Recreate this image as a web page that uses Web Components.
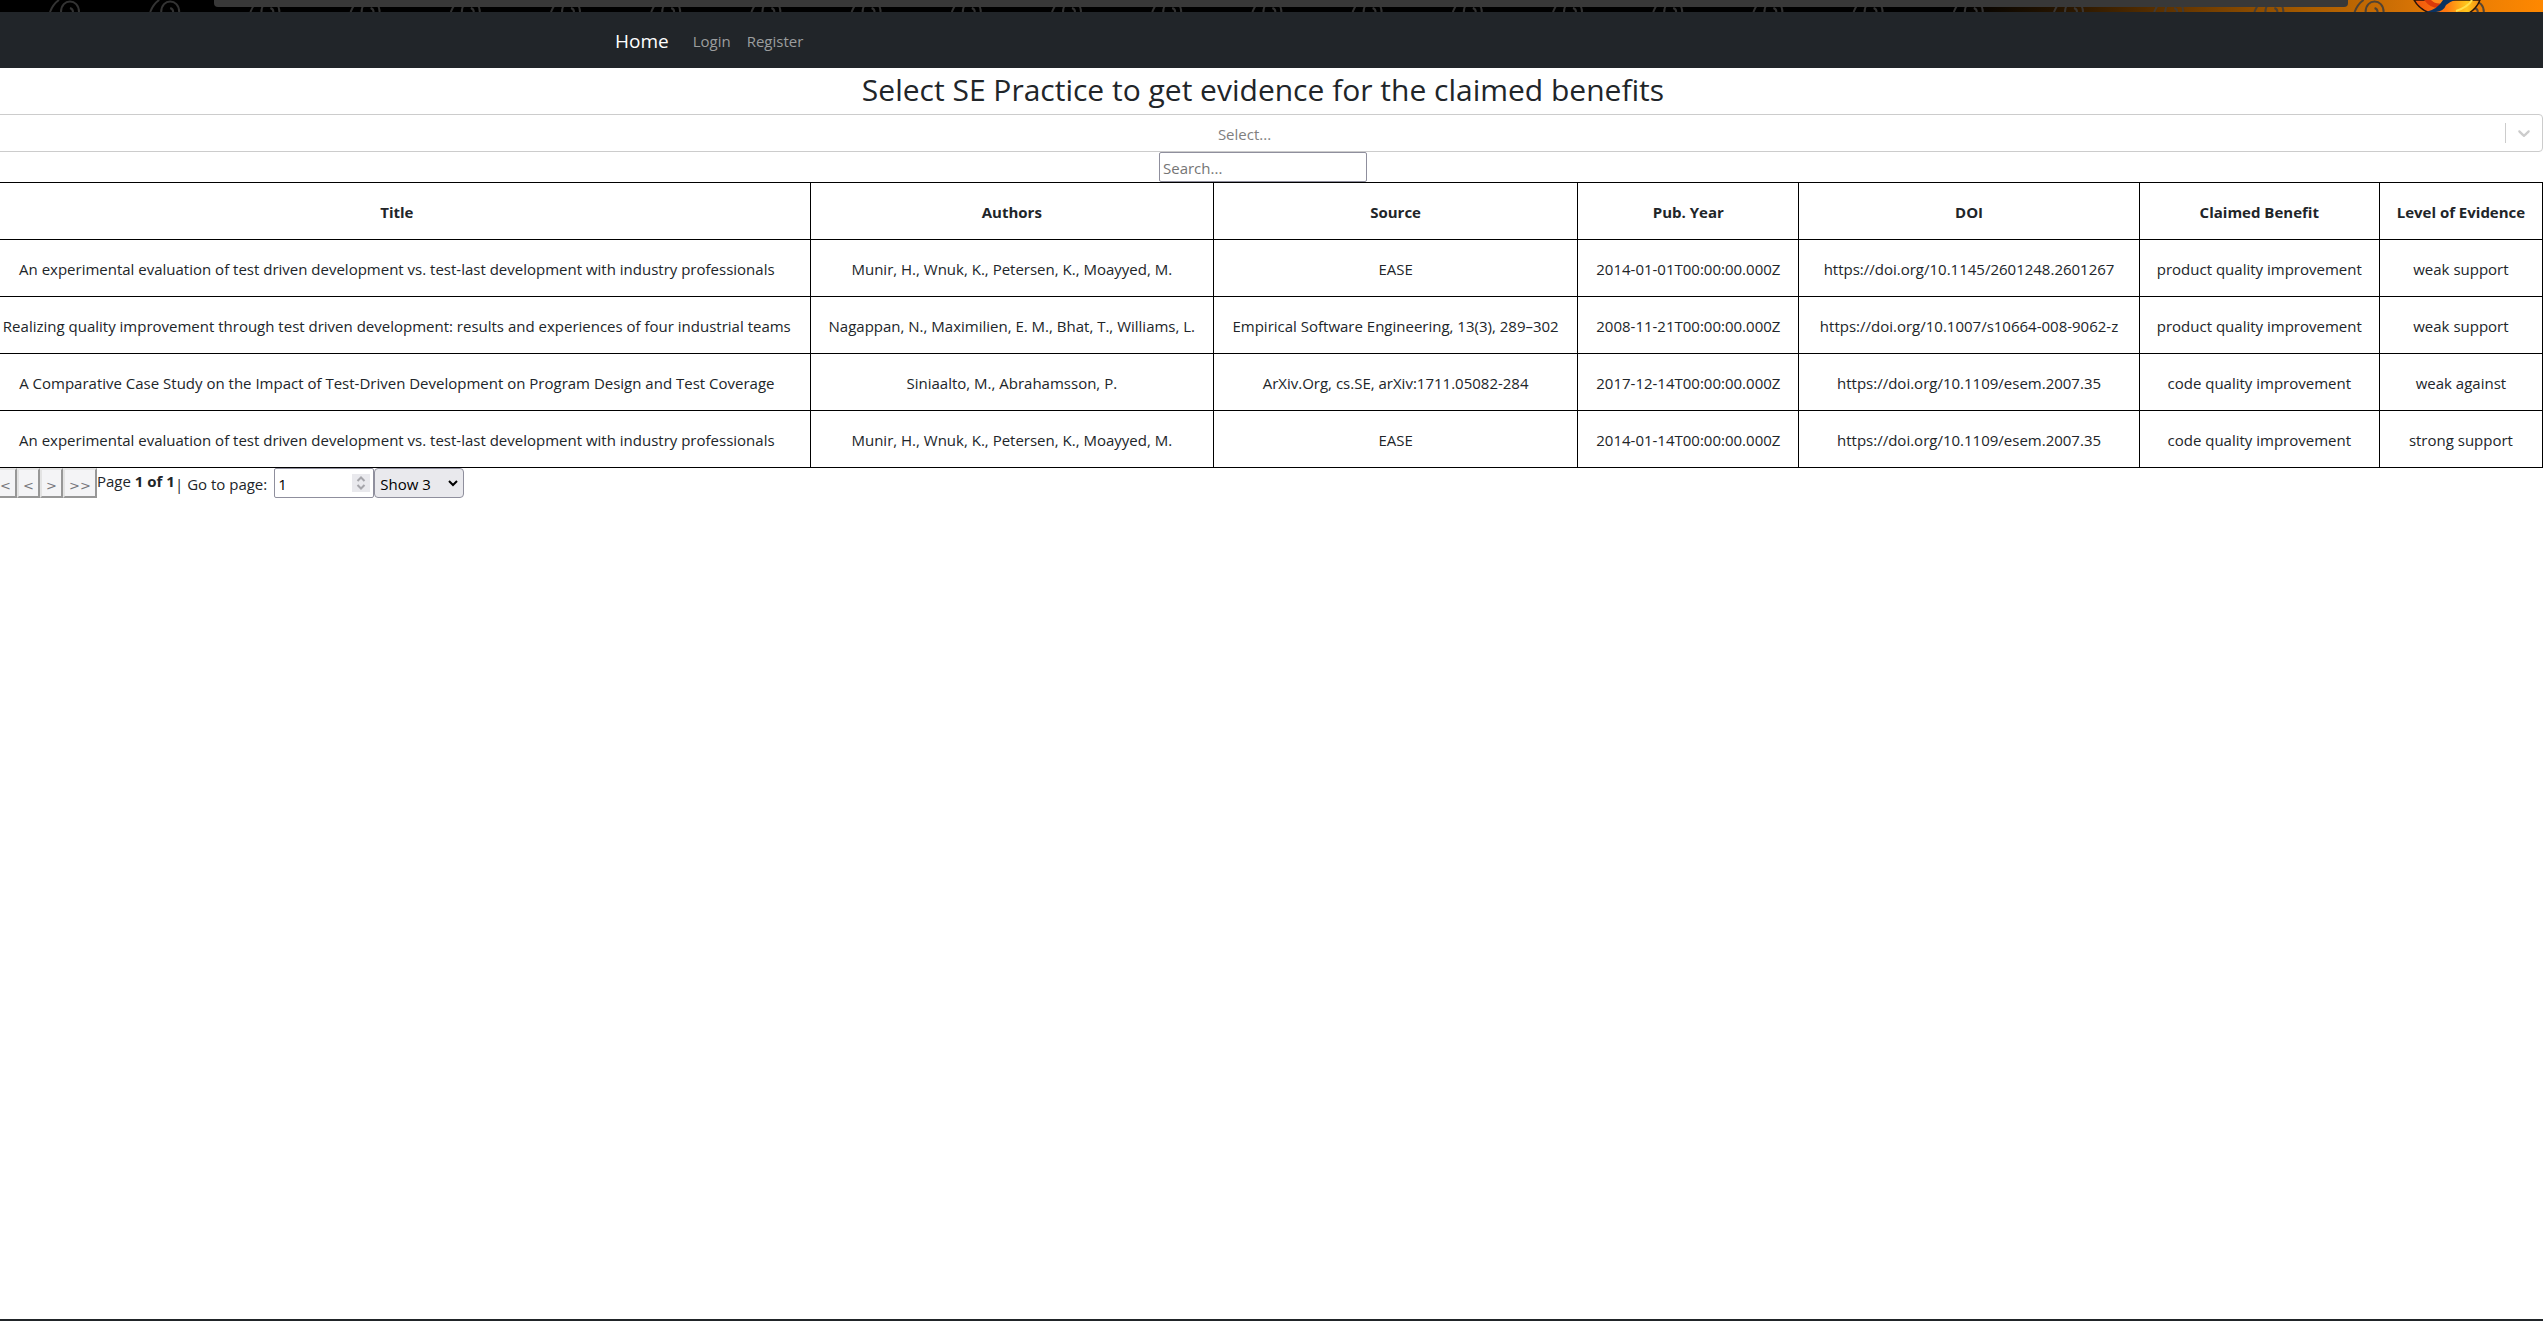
<!DOCTYPE html>
<html lang="en">
<head>
<meta charset="utf-8">
<title>SE Practice Evidence</title>
<style>
  html, body { margin: 0; }
  body {
    font-family: "Open Sans", "Noto Sans", sans-serif;
    font-size: 15px;
    line-height: 24px;
    color: #212529;
    background: #fff;
    overflow-x: hidden;
  }
</style>
</head>
<body>
<evidence-app></evidence-app>
<script>
const define = (name, html, setup) => {
  const tpl = document.createElement('template');
  tpl.innerHTML = '<style>*,*::before,*::after{box-sizing:border-box}</style>' + html;
  customElements.define(name, class extends HTMLElement {
    constructor() {
      super();
      this.attachShadow({ mode: 'open' }).append(tpl.content.cloneNode(true));
      if (setup) setup(this.shadowRoot, this);
    }
  });
};

define('theme-strip', `
  <style>
    :host { display: block; height: 12px; background: #000; overflow: hidden; }
    svg { display: block; width: 100%; height: 12px; }
  </style>
  <svg viewBox="0 0 2543 12" preserveAspectRatio="xMaxYMin slice" aria-hidden="true">
    <defs>
      <linearGradient id="glow">
        <stop offset="0" stop-color="#000"/>
        <stop offset=".2" stop-color="#2c1800"/>
        <stop offset=".4" stop-color="#6c3a00"/>
        <stop offset=".6" stop-color="#a85c00"/>
        <stop offset=".8" stop-color="#dc7606"/>
        <stop offset="1" stop-color="#ff8800"/>
      </linearGradient>
      <linearGradient id="fox">
        <stop offset="0" stop-color="#f0560c"/>
        <stop offset=".5" stop-color="#ff7a10"/>
        <stop offset=".8" stop-color="#ffc61c"/>
        <stop offset="1" stop-color="#f58a10"/>
      </linearGradient>
    </defs>
    <rect x="1960" width="583" height="12" fill="url(#glow)"/>
    <g id="swirls" fill="none" stroke="#3c3c3c" stroke-opacity=".85" stroke-width="2"></g>
    <path d="M2414 0C2418 7 2424 11 2430 13H2469C2474 10 2478 5 2480 0Z" fill="url(#fox)" stroke="#2a1408" stroke-width="1.5"/>
    <path d="M2424 0Q2431 9 2440 8Q2447 6 2448 0" fill="#d93a0a"/>
    <path d="M2431 0Q2436 5 2443 3L2446 0Z" fill="#ff8a1c"/>
    <path d="M2426 12Q2438 9 2443 0H2455Q2449 2 2446 5Q2444 11 2436 12Z" fill="#0a3260"/>
    <path d="M2456 11Q2468 7 2472 0" fill="none" stroke="#ffe04a" stroke-width="2"/>
    <path d="M214 0V3Q214 7 218 7H2344Q2348 7 2348 3V0Z" fill="#383838"/>
  </svg>`, root => {
  const g = root.getElementById('swirls');
  const swirl = 'M1 12Q4 4 10 0M12 12C12 -2 30 -2 30 12M21 8Q24 9 24 12';
  for (let i = 0; i < 25; i++) {
    const p = document.createElementNS('http://www.w3.org/2000/svg', 'path');
    p.setAttribute('d', swirl);
    p.setAttribute('transform', 'translate(' + (49 + i * 100.2) + ' 0)');
    g.append(p);
  }
});

define('site-nav', `
  <style>
    :host { display: block; background: #212529; }
    nav { display: flex; align-items: center; max-width: 1320px; height: 56px; margin: 0 auto; padding: 2px 12px 0; }
    .brand { font-size: 19px; line-height: 30px; color: #fff; margin-right: 16px; }
    a { color: #9b9d9e; text-decoration: none; }
    .link { padding: 8px; }
  </style>
  <nav>
    <a class="brand" href="#home">Home</a>
    <a class="link" href="#login">Login</a>
    <a class="link" href="#register">Register</a>
  </nav>`);

define('practice-select', `
  <style>
    :host { display: flex; align-items: center; height: 38px; border: 1px solid #ccc; border-radius: 4px; background: #fff; }
    input { flex: 1; min-width: 0; height: 36px; border: 0; padding: 2px 0 0; background: none; font: inherit; text-align: center; outline: 0; }
    input::placeholder { color: #808080; opacity: 1; }
    .bar { width: 1px; height: 20px; background: #ccc; }
    button { display: flex; border: 0; background: none; padding: 8px; }
    svg { width: 20px; height: 20px; fill: #ccc; }
  </style>
  <input type="text" role="combobox" aria-label="SE Practice" aria-expanded="false" placeholder="Select...">
  <span class="bar"></span>
  <button type="button" aria-label="Open">
    <svg viewBox="0 0 20 20"><path d="M4.516 7.548c0.436-0.446 1.043-0.481 1.576 0l3.908 3.747 3.908-3.747c0.533-0.481 1.141-0.446 1.574 0 0.436 0.445 0.408 1.197 0 1.615-0.406 0.418-4.695 4.502-4.695 4.502-0.217 0.223-0.502 0.335-0.787 0.335s-0.57-0.112-0.789-0.335c0 0-4.287-4.084-4.695-4.502s-0.436-1.17 0-1.615z"/></svg>
  </button>`);

define('search-box', `
  <style>
    :host { display: flex; justify-content: center; }
    input { width: 208px; height: 30px; border: 1px solid #8f8f9d; border-radius: 2px; padding: 2px 3px 0; font: inherit; background: #fff; }
    input::placeholder { color: #757575; opacity: 1; }
  </style>
  <input type="text" aria-label="Search" placeholder="Search...">`);

define('evidence-table', `
  <style>
    :host { display: block; }
    table { width: 100%; table-layout: fixed; border-collapse: collapse; text-align: center; }
    th, td { border: 1px solid #000; padding: 17px 0 15px; white-space: nowrap; font-weight: 400; }
    th { font-weight: 700; }
  </style>
  <table>
    <colgroup></colgroup>
    <thead><tr></tr></thead>
    <tbody></tbody>
  </table>`, root => {
  const columns = [
    ['Title', 826], ['Authors', 403], ['Source', 364], ['Pub. Year', 221],
    ['DOI', 340], ['Claimed Benefit', 240], ['Level of Evidence', 163]
  ];
  const rows = [
    ['An experimental evaluation of test driven development vs. test-last development with industry professionals', 'Munir, H., Wnuk, K., Petersen, K., Moayyed, M.', 'EASE', '2014-01-01T00:00:00.000Z', 'https://doi.org/10.1145/2601248.2601267', 'product quality improvement', 'weak support'],
    ['Realizing quality improvement through test driven development: results and experiences of four industrial teams', 'Nagappan, N., Maximilien, E. M., Bhat, T., Williams, L.', 'Empirical Software Engineering, 13(3), 289–302', '2008-11-21T00:00:00.000Z', 'https://doi.org/10.1007/s10664-008-9062-z', 'product quality improvement', 'weak support'],
    ['A Comparative Case Study on the Impact of Test-Driven Development on Program Design and Test Coverage', 'Siniaalto, M., Abrahamsson, P.', 'ArXiv.Org, cs.SE, arXiv:1711.05082-284', '2017-12-14T00:00:00.000Z', 'https://doi.org/10.1109/esem.2007.35', 'code quality improvement', 'weak against'],
    ['An experimental evaluation of test driven development vs. test-last development with industry professionals', 'Munir, H., Wnuk, K., Petersen, K., Moayyed, M.', 'EASE', '2014-01-14T00:00:00.000Z', 'https://doi.org/10.1109/esem.2007.35', 'code quality improvement', 'strong support']
  ];
  root.querySelector('colgroup').innerHTML = columns.map(c => `<col style="width:${c[1]}px">`).join('');
  root.querySelector('thead tr').innerHTML = columns.map(c => `<th scope="col">${c[0]}</th>`).join('');
  root.querySelector('tbody').innerHTML = rows.map(r => `<tr>${r.map(c => `<td>${c}</td>`).join('')}</tr>`).join('');
});

define('page-controls', `
  <style>
    :host { display: flex; align-items: flex-start; height: 30px; }
    button { width: 23px; height: 30px; border: 2px solid; border-color: #e3e3e3 #979797 #979797 #e3e3e3; background: #f4f4f6; color: #77777c; font-family: "DejaVu Sans", sans-serif; font-size: 13px; line-height: 24px; padding: 4px 0 0; }
    button.wide { width: 34px; }
    .count { padding-top: 1px; }
    label, .divider { line-height: 32px; }
    label { margin: 0 7px 0 4px; }
    .number { display: flex; align-items: center; width: 100px; height: 30px; border: 1px solid #8f8f9d; border-radius: 2px; padding: 0 3px; background: #fff; }
    .number input { flex: 1; min-width: 0; height: 28px; border: 0; padding: 2px 0 0; font: inherit; appearance: textfield; background: none; outline: 0; }
    input::-webkit-inner-spin-button { appearance: none; }
    .number svg { width: 18px; height: 18px; background: #e9e9ed; }
    .size { display: grid; align-items: center; }
    .size > * { grid-area: 1 / 1; }
    .size svg { justify-self: end; width: 10px; height: 10px; margin-right: 6px; pointer-events: none; }
    select { appearance: none; width: 90px; height: 30px; border: 1px solid #8f8f9d; border-radius: 4px; padding: 2px 5px 0; background: #e9e9ed; color: #000; font: inherit; }
    path { fill: none; stroke-width: 2; }
  </style>
  <button type="button" class="wide" disabled aria-label="First page">&lt;&lt;</button>
  <button type="button" disabled aria-label="Previous page">&lt;</button>
  <button type="button" disabled aria-label="Next page">&gt;</button>
  <button type="button" class="wide" disabled aria-label="Last page">&gt;&gt;</button>
  <span class="count">Page <strong>1 of 1</strong></span>
  <span class="divider">|</span>
  <label for="page">Go to page:</label>
  <span class="number">
    <input id="page" type="number" value="1">
    <svg viewBox="0 0 18 18" aria-hidden="true"><path stroke="#a5a5aa" d="M5.500 7L9 3.500L12.500 7M5.500 11L9 14.500L12.500 11"/></svg>
  </span>
  <span class="size">
    <select aria-label="Rows per page"><option>Show 3</option><option>Show 5</option></select>
    <svg viewBox="0 0 10 10" aria-hidden="true"><path stroke="#000" d="M1 3L5 7L9 3"/></svg>
  </span>`);

define('evidence-app', `
  <style>
    :host { display: flex; flex-direction: column; min-height: 100vh; }
    .page { flex: 1; margin-left: -17px; }
    h1 { margin: 0; padding: 3px 0 5px; font-size: 30px; line-height: 38px; font-weight: 400; text-align: center; }
    footer { height: 2px; background: #212529; }
  </style>
  <theme-strip></theme-strip>
  <div class="page">
    <site-nav></site-nav>
    <main>
      <h1>Select SE Practice to get evidence for the claimed benefits</h1>
      <practice-select></practice-select>
      <search-box></search-box>
      <evidence-table></evidence-table>
      <page-controls></page-controls>
    </main>
  </div>
  <footer></footer>`);
</script>
</body>
</html>
